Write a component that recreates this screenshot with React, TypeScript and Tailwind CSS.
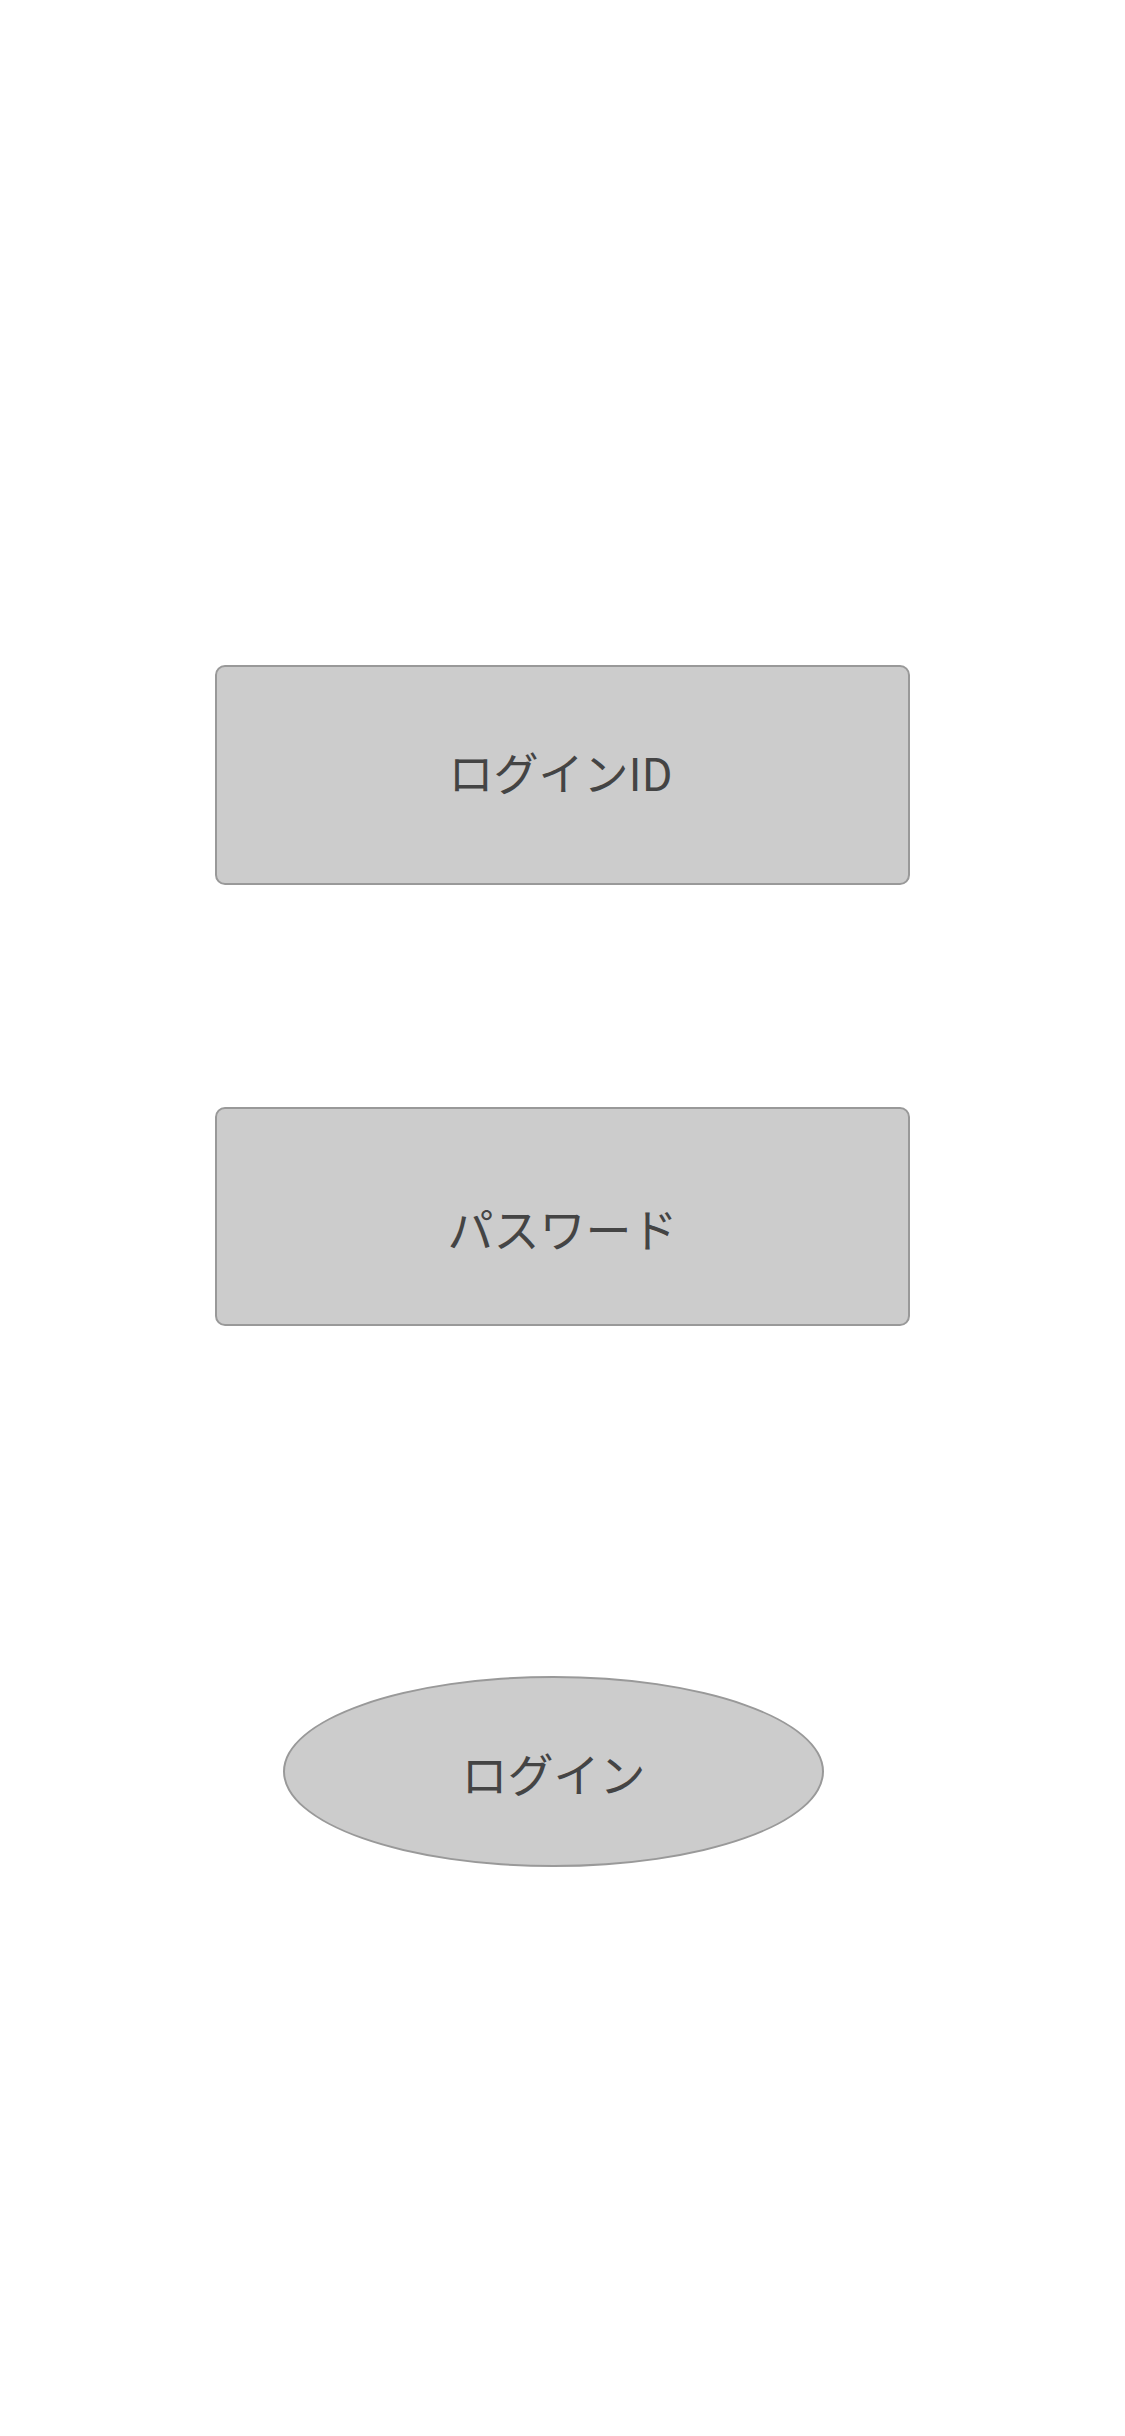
export default function App() {
  const font = { fontFamily: '"Noto Sans CJK JP", "Noto Sans", sans-serif' };
  return (
    <div
      className="w-[1125px] min-h-[2436px] bg-white flex flex-col items-center text-[#444444]"
      style={font}
    >
      <div className="mt-[665px] w-[695px] h-[220px] rounded-[10px] border-2 border-[#999999] bg-[#cccccc] flex items-center justify-center pb-[8px] pr-[4px]">
        <span className="text-[45px] leading-none">ログインID</span>
      </div>
      <div className="mt-[222px] w-[695px] h-[219px] rounded-[10px] border-2 border-[#999999] bg-[#cccccc] flex items-center justify-center pt-[20px]">
        <span className="text-[46px] leading-none">パスワード</span>
      </div>
      <div className="mt-[350px] mr-[18px] w-[541px] h-[191px] rounded-[50%] border-2 border-[#999999] bg-[#cccccc] flex items-center justify-center">
        <span className="text-[46px] leading-none">ログイン</span>
      </div>
    </div>
  );
}
